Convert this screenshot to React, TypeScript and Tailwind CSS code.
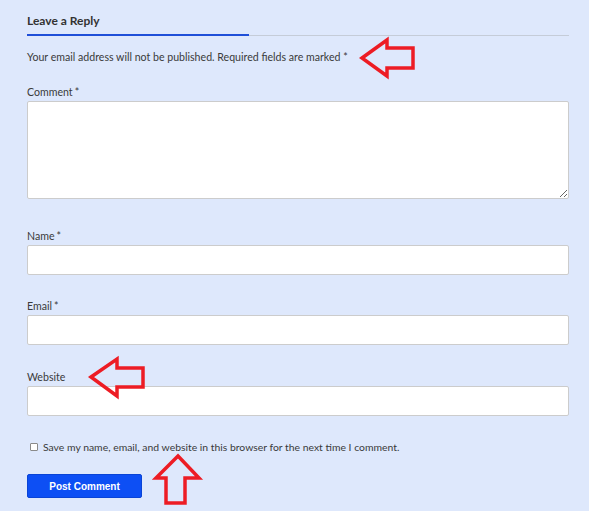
import React from 'react'

const font = { fontFamily: 'Lato, "Noto Sans", sans-serif' }

function Field({ label, required, tall }: { label: string; required?: boolean; tall?: boolean }) {
  return (
    <div className="flex flex-col">
      <label className="text-[10.6px] leading-[16px] text-[#3a3a3a] mb-px">
        {label}
        {required && <span className="ml-[2px]">*</span>}
      </label>
      {tall ? (
        <textarea className="h-[98px] w-full bg-white border border-[#cccccc] rounded-[2px] outline-none" />
      ) : (
        <input type="text" className="h-[30px] w-full bg-white border border-[#cccccc] rounded-[2px] outline-none" />
      )}
    </div>
  )
}

export default function App() {
  return (
    <div className="relative w-[589px] h-[511px] bg-[#dee8fc] overflow-hidden" style={font}>
      <div className="pl-[27px] pr-[20px] pt-[12px]">
        {/* Title */}
        <h3 className="text-[12px] leading-[17px] font-bold text-[#333333]">Leave a Reply</h3>
        <div className="flex items-end mt-[5px]">
          <div className="w-[222px] h-[2px] bg-[#1f4fd8]" />
          <div className="flex-1 h-px bg-[#c5ccd8]" />
        </div>

        <p className="mt-[13px] text-[10.6px] leading-[16px] text-[#3a3a3a]">
          Your email address will not be published. Required fields are marked *
        </p>

        <div className="mt-[19px]">
          <Field label="Comment" required tall />
        </div>
        <div className="mt-[29px]">
          <Field label="Name" required />
        </div>
        <div className="mt-[23px]">
          <Field label="Email" required />
        </div>
        <div className="mt-[24px]">
          <Field label="Website" />
        </div>

        <div className="mt-[23px] flex items-center h-[16px]">
          <input
            type="checkbox"
            className="appearance-none w-[8px] h-[8px] ml-[3px] mr-[5px] border border-[#8a8a8a] bg-white rounded-[1px]"
          />
          <span className="text-[10.4px] leading-[16px] text-[#3a3a3a]">
            Save my name, email, and website in this browser for the next time I comment.
          </span>
        </div>

        <button
          className="mt-[19px] w-[115px] h-[24px] bg-[#0d4ff4] rounded-[2px] text-white text-[10px] font-bold border border-[#0a44d6]"
          style={{ fontFamily: '"Liberation Sans", Arial, sans-serif' }}
        >
          Post Comment
        </button>
      </div>

      {/* annotation arrows */}
      <svg className="absolute inset-0 pointer-events-none" width="589" height="511">
        <g fill="none" stroke="#ed1c24" strokeWidth="3.5" strokeLinejoin="miter">
          <polygon points="362,58 387,40 387,48 413,48 413,68 387,68 387,76" />
          <polygon points="91,377 117,359 117,368 143,368 143,387 117,387 117,396" />
          <polygon points="178,456 199,478 185,478 185,503 166,503 166,478 156,478" />
        </g>
      </svg>
    </div>
  )
}
